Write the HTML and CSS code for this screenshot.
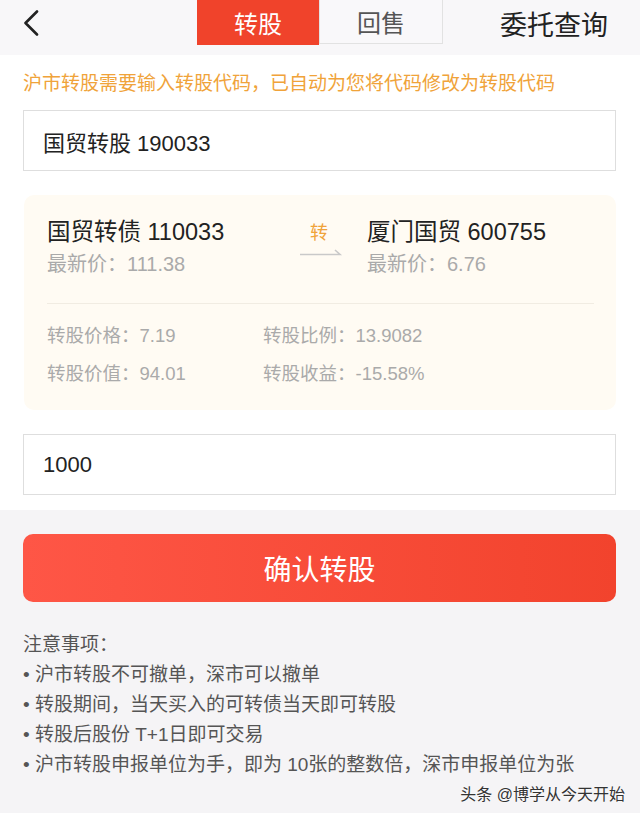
FILE: index.html
```html
<!DOCTYPE html>
<html lang="zh-CN">
<head>
    <meta charset="UTF-8">
    <meta name="viewport" content="width=device-width, initial-scale=1.0">
    <title>转股</title>
    <link rel="stylesheet" href="styles.css">
</head>
<body>
    <div class="header">
        <div class="back">
            <svg width="16" height="26" viewBox="0 0 16 26"><path d="M14 1.5 L2.5 13 L14 24.5" fill="none" stroke="#222" stroke-width="2.6" stroke-linecap="round" stroke-linejoin="round"/></svg>
        </div>
        <div class="tabs">
            <div class="tab active">转股</div>
            <div class="tab">回售</div>
        </div>
        <div class="query">委托查询</div>
    </div>

    <div class="form">
        <p class="notice">沪市转股需要输入转股代码，已自动为您将代码修改为转股代码</p>
        <div class="input-field">国贸转股 190033</div>

        <div class="card">
            <div class="pair">
                <div class="bond">
                    <div class="name">国贸转债 110033</div>
                    <div class="price">最新价：111.38</div>
                </div>
                <div class="arrow">
                    <span>转</span>
                    <svg width="44" height="12" viewBox="0 0 44 12"><path d="M1 9.5 H41 L36 5" fill="none" stroke="#c9c9c9" stroke-width="1.6"/></svg>
                </div>
                <div class="bond">
                    <div class="name">厦门国贸 600755</div>
                    <div class="price">最新价：6.76</div>
                </div>
            </div>
            <div class="divider"></div>
            <div class="stats">
                <div>转股价格：7.19</div>
                <div>转股比例：13.9082</div>
                <div>转股价值：94.01</div>
                <div>转股收益：-15.58%</div>
            </div>
        </div>

        <div class="input-field">1000</div>
    </div>

    <div class="bottom">
        <button class="confirm">确认转股</button>
        <div class="notes">
            <p>注意事项：</p>
            <p>• 沪市转股不可撤单，深市可以撤单</p>
            <p>• 转股期间，当天买入的可转债当天即可转股</p>
            <p>• 转股后股份 T+1日即可交易</p>
            <p>• 沪市转股申报单位为手，即为 10张的整数倍，深市申报单位为张</p>
        </div>
        <div class="mark">头条 @博学从今天开始</div>
    </div>
</body>
</html>
```

FILE: styles.css
```css
* {
    box-sizing: border-box;
}
body {
    margin: 0;
    background-color: #f5f4f6;
    font-family: "Liberation Sans", "Noto Sans CJK SC", sans-serif;
    color: #222;
}
p {
    margin: 0;
}
.header {
    height: 55px;
    background-color: #f8f7f9;
    display: grid;
    grid-template-columns: 1fr auto 1fr;
    align-items: start;
}
.back {
    padding: 10px 0 0 23px;
}
.tabs {
    display: flex;
}
.tab {
    width: 124px;
    height: 44px;
    border: 1px solid #e2e2e2;
    border-top: none;
    font-size: 24px;
    color: #555;
    display: flex;
    align-items: center;
    justify-content: center;
    background-color: #f9f8fa;
}
.tab.active {
    width: 122px;
    height: 45px;
    border: none;
    background-color: #f0432b;
    color: #fff;
}
.query {
    justify-self: end;
    padding: 4px 32px 0 0;
    font-size: 27px;
    color: #222;
}
.form {
    background-color: #fff;
    padding: 16px 24px 15px 23px;
}
.notice {
    color: #f0a33a;
    font-size: 19px;
    line-height: 26px;
    margin-bottom: 13px;
}
.input-field {
    height: 61px;
    border: 1px solid #dedede;
    background-color: #fff;
    padding-left: 19px;
    display: flex;
    align-items: center;
    font-size: 22px;
    color: #222;
}
.card {
    margin: 24px 0 24px 1px;
    background-color: #fffbf3;
    border-radius: 10px;
    padding: 21px 22px 21px 23px;
}
.pair {
    display: flex;
    align-items: flex-start;
}
.bond {
    width: 252px;
    flex-shrink: 0;
}
.bond:last-child {
    flex: 1;
}
.name {
    font-size: 23.5px;
    line-height: 32px;
}
.price {
    font-size: 20px;
    line-height: 32px;
    color: #aaa;
}
.arrow {
    width: 44px;
    flex-shrink: 0;
    margin-right: 24px;
    display: flex;
    flex-direction: column;
    align-items: center;
    padding-top: 6px;
}
.arrow span {
    font-size: 18px;
    line-height: 22px;
    color: #f0a33a;
    margin-left: -4px;
}
.arrow svg {
    margin-top: 1px;
}
.divider {
    height: 1px;
    background-color: #f1ece2;
    margin: 23px 0 17px;
}
.stats {
    display: grid;
    grid-template-columns: 216px 1fr;
    row-gap: 8px;
    font-size: 18.5px;
    line-height: 30px;
    color: #aaa;
}
.bottom {
    padding: 24px 24px 0 23px;
}
.confirm {
    width: 100%;
    height: 68px;
    border: none;
    border-radius: 10px;
    background: linear-gradient(90deg, #fe5646, #f2432d);
    color: #fff;
    font-family: inherit;
    font-size: 28px;
    display: block;
}
.notes {
    margin-top: 28px;
    font-size: 19px;
    line-height: 30px;
    color: #555;
}
.mark {
    text-align: right;
    margin: 1px -9px 0 0;
    font-size: 16px;
    color: #333;
    text-shadow: 0 0 2px #fff;
}
```
